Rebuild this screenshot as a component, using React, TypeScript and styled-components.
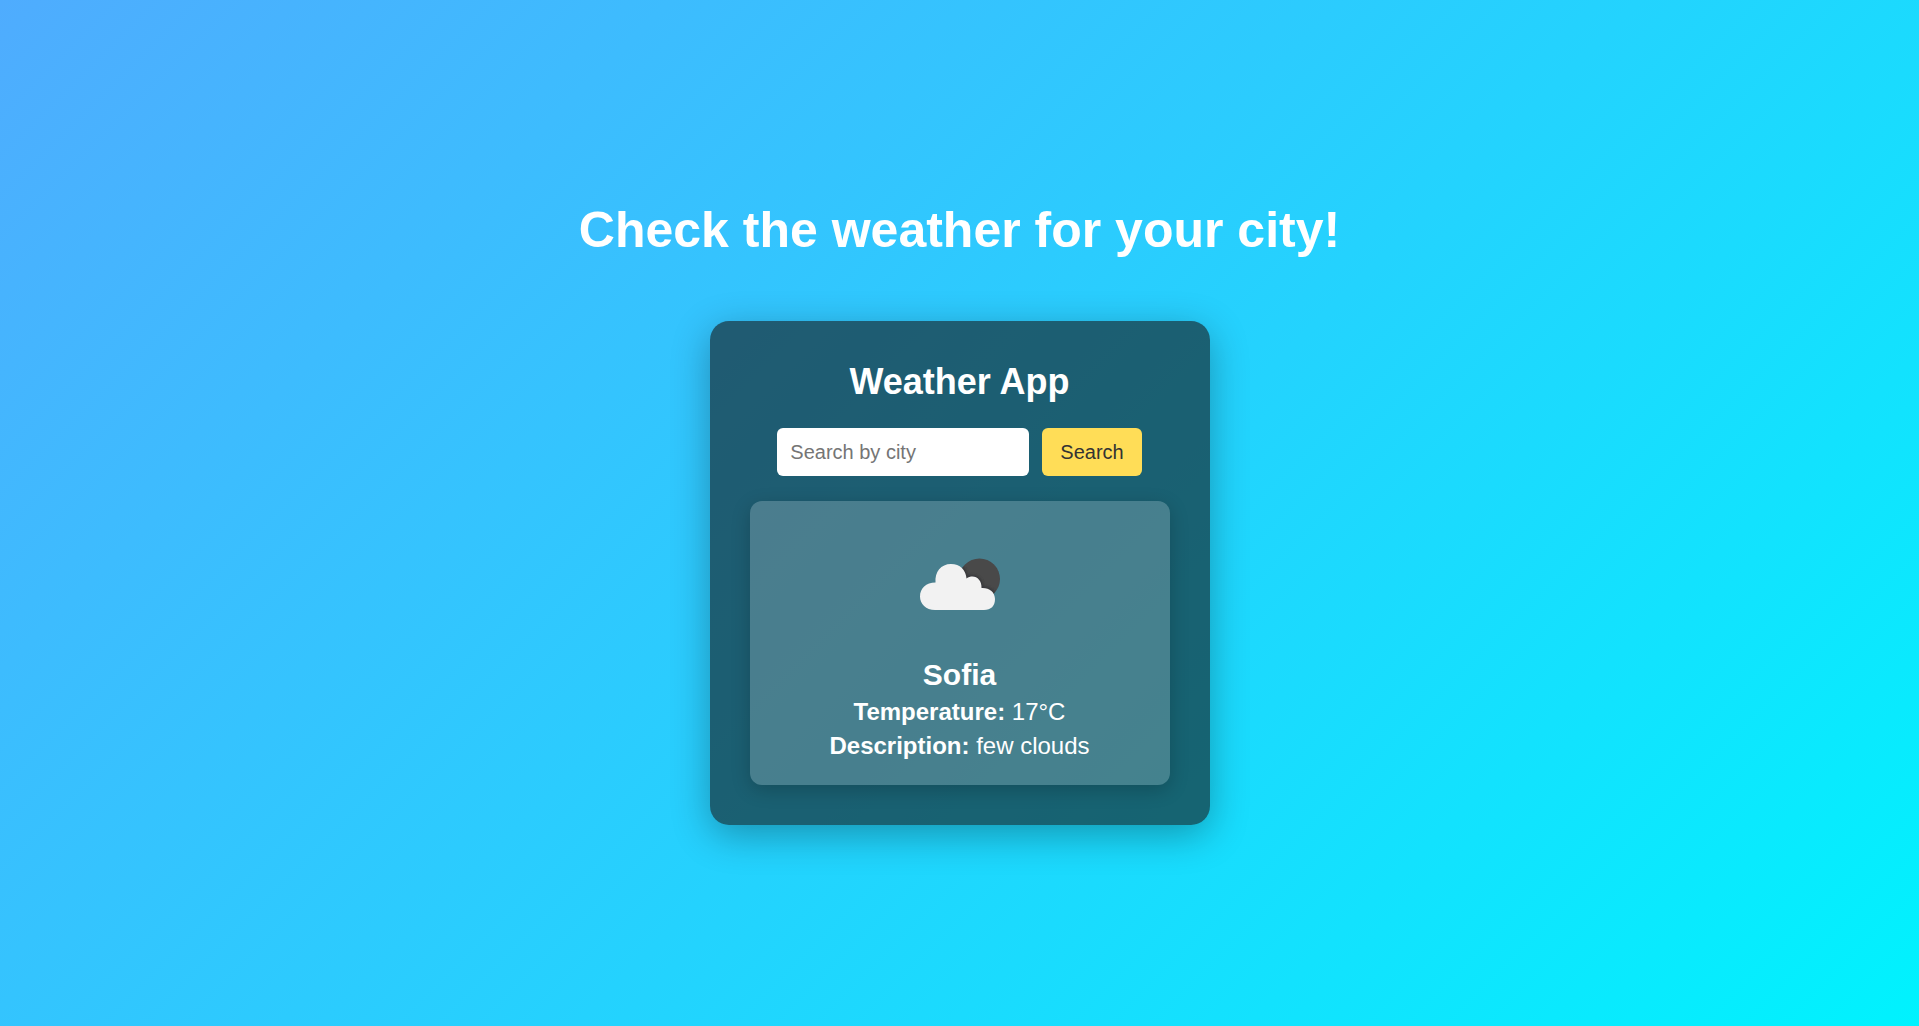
import { useState } from "react";
import styled, { createGlobalStyle } from "styled-components";

const GlobalStyle = createGlobalStyle`
  *, *::before, *::after { box-sizing: border-box; }
  body {
    margin: 0;
    font-family: "Liberation Sans", Arial, sans-serif;
    color: #fff;
  }
`;

const Page = styled.main`
  min-height: 100vh;
  display: flex;
  flex-direction: column;
  align-items: center;
  justify-content: center;
  gap: 62px;
  background: linear-gradient(135deg, #4facfe, #00f2fe);
`;

const PageTitle = styled.h1`
  margin: 0;
  font-size: 50px;
  line-height: 58px;
  text-align: center;
`;

const Card = styled.section`
  width: 100%;
  max-width: 500px;
  padding: 40px;
  display: flex;
  flex-direction: column;
  gap: 25px;
  text-align: center;
  background: rgba(20, 20, 20, 0.6);
  border-radius: 19px;
  box-shadow: 0 10px 38px rgba(0, 0, 0, 0.3);
`;

const CardTitle = styled.h2`
  margin: 0;
  font-size: 36px;
  line-height: 42px;
`;

const SearchForm = styled.form`
  display: flex;
  justify-content: center;
  gap: 13px;
`;

const SearchInput = styled.input`
  width: 60%;
  height: 48px;
  padding: 0 13px;
  border: none;
  border-radius: 6px;
  background: #fff;
  color: #333;
  font: inherit;
  font-size: 20px;

  &::placeholder { color: #757575; }
`;

const SearchButton = styled.button`
  height: 48px;
  padding: 0 18px;
  border: none;
  border-radius: 6px;
  background: #ffdd57;
  color: #333;
  font: inherit;
  font-size: 20px;
  cursor: pointer;
`;

const Result = styled.article`
  padding: 25px;
  display: flex;
  flex-direction: column;
  align-items: center;
  gap: 6px;
  background: rgba(255, 255, 255, 0.2);
  border-radius: 12px;
  box-shadow: 0 5px 19px rgba(0, 0, 0, 0.2);
`;

const WeatherIcon = styled.svg`
  width: 126px;
  height: 126px;
`;

const City = styled.h3`
  margin: 0;
  font-size: 30px;
  line-height: 34px;
`;

const Detail = styled.p`
  margin: 0;
  font-size: 24px;
  line-height: 28px;
`;

const CLOUD =
  "M38 84 C29 84 23 78 23 70.500 C23 62.500 29 56.500 38.500 56.500 C37.500 46 44 38 54 38 C63 38 69 44 69.500 52.500 C77 47.500 85 53 84.500 62 C92 61.500 98 66 98 73 C98 80 94 84 87 84 Z";

function FewClouds() {
  return (
    <WeatherIcon viewBox="0 0 126 126" role="img" aria-label="few clouds">
      <defs>
        <filter id="soft" x="-20%" y="-20%" width="140%" height="140%">
          <feGaussianBlur stdDeviation="1" />
        </filter>
        <filter id="edge" x="-20%" y="-20%" width="140%" height="140%">
          <feGaussianBlur stdDeviation="0.6" />
        </filter>
        <clipPath id="disc">
          <circle cx="82.500" cy="53" r="20.500" />
        </clipPath>
      </defs>
      <circle cx="82.500" cy="53" r="20.500" fill="#48484a" filter="url(#edge)" />
      <g clipPath="url(#disc)">
        <path d={CLOUD} fill="none" stroke="#3a3a3c" strokeWidth="4" filter="url(#soft)" />
      </g>
      <path d={CLOUD} fill="#f2f2f2" filter="url(#edge)" />
    </WeatherIcon>
  );
}

export default function App() {
  const [query, setQuery] = useState("");

  return (
    <>
      <GlobalStyle />
      <Page>
        <PageTitle>Check the weather for your city!</PageTitle>
        <Card>
          <CardTitle>Weather App</CardTitle>
          <SearchForm onSubmit={(event) => event.preventDefault()}>
            <SearchInput
              type="text"
              aria-label="Search by city"
              placeholder="Search by city"
              value={query}
              onChange={(event) => setQuery(event.target.value)}
            />
            <SearchButton type="submit">Search</SearchButton>
          </SearchForm>
          <Result>
            <FewClouds />
            <City>Sofia</City>
            <Detail>
              <strong>Temperature:</strong> 17°C
            </Detail>
            <Detail>
              <strong>Description:</strong> few clouds
            </Detail>
          </Result>
        </Card>
      </Page>
    </>
  );
}
